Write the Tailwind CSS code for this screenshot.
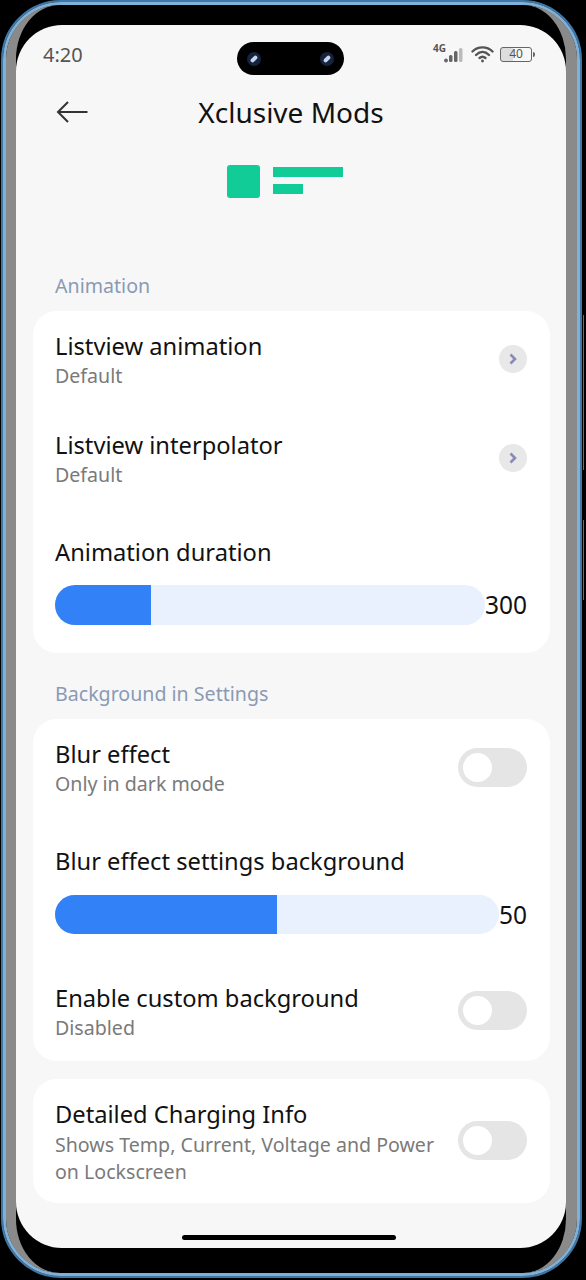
<!DOCTYPE html>
<html lang="en">
<head>
<meta charset="utf-8"/>
<meta content="width=device-width, initial-scale=1.0" name="viewport"/>
<title>Xclusive Mods</title>
<script src="https://cdn.jsdelivr.net/npm/@tailwindcss/browser@4"></script>
</head>
<body class="bg-black font-['Noto_Sans',sans-serif]">
<div class="relative w-[586px] h-[1280px] bg-black overflow-hidden pl-[1px] pr-[4px] pb-[2px]">
  <!-- side buttons -->
  <div class="absolute right-[2px] top-[315px] w-[1px] h-[155px] bg-[#3f78a8]"></div>
  <div class="absolute right-[2px] top-[520px] w-[1px] h-[80px] bg-[#3f78a8]"></div>
  <!-- phone frame -->
  <div class="h-full rounded-[60px] border-[2px] border-[#3f78a8]">
    <div class="h-full rounded-[58px] border-[3px] border-[#7fb0d8] bg-black">
      <div class="h-full rounded-[54px] border-l-[10px] border-r-[11px] border-[#8a8a8a] bg-black pt-[20px] pb-[25px]">
        <div class="h-full rounded-[46px] bg-[#f7f7f7] flex flex-col overflow-hidden">
          <!-- status bar -->
          <div class="h-[65px] pl-[27px] pr-[31px] flex items-start justify-between text-[#555]">
            <span class="mt-[12px] w-[164px] text-[20px] leading-[36px]">4:20</span>
            <div class="mt-[17px] w-[107px] h-[33px] bg-black rounded-full flex items-center justify-between px-[10px]">
              <div class="w-[14px] h-[14px] rounded-full bg-[#16233f] flex items-center justify-center"><div class="w-[8px] h-[4px] rounded-full bg-[#c4d4ea] -rotate-45"></div></div>
              <div class="w-[14px] h-[14px] rounded-full bg-[#16233f] flex items-center justify-center"><div class="w-[8px] h-[4px] rounded-full bg-[#c4d4ea] -rotate-45"></div></div>
            </div>
            <div class="mt-[20px] w-[161px] flex items-center justify-end gap-[5px]">
              <div class="relative w-[31px] h-[18px]">
                <span class="absolute left-[-2px] top-[-2px] text-[10px] leading-[11px] font-bold">4G</span>
                <svg class="absolute left-[8px] top-[2px]" width="23" height="16" viewBox="0 0 23 16" fill="#666"><circle cx="3" cy="13.5" r="1.9"/><rect x="6" y="8" width="3.500" height="7" rx="1.5"/><rect x="11" y="4" width="3.500" height="11" rx="1.5"/><rect x="16" y="1" width="3.500" height="14" rx="1.5" fill="#bbb"/></svg>
              </div>
              <svg width="24" height="18" viewBox="0 0 24 18" fill="none" stroke="#555" stroke-width="2.4" stroke-linecap="round"><path d="M1.5 6.5C7 1 16 1 21.5 6.5"/><path d="M5 10C9 6 14 6 18 10"/><path d="M8.5 13c2-1.700 4-1.700 6 0"/><circle cx="11.500" cy="16" r="1.400" fill="#555" stroke="none"/></svg>
              <div class="flex items-center gap-[1px]">
                <div class="w-[32px] h-[15px] rounded-[3px] border border-[#666] flex items-center justify-center text-[12px] leading-none bg-gradient-to-r from-[#ddd] from-40% to-transparent to-40%">40</div>
                <div class="w-[2px] h-[5px] bg-[#666] rounded-r-full"></div>
              </div>
            </div>
          </div>
          <!-- title -->
          <div class="relative h-[46px] pb-[2px] flex items-center justify-center">
            <svg class="absolute left-[40px] top-[10px]" width="32" height="24" viewBox="0 0 32 24" fill="none" stroke="#333" stroke-width="2"><path d="M31.500 12H2"/><path d="M12 2 2 12l10 10"/></svg>
            <h1 class="text-[28px] leading-[44px] text-[#111]">Xclusive Mods</h1>
          </div>
          <!-- logo -->
          <div class="mt-[29px] ml-[211px] flex gap-[13px]">
            <div class="w-[33px] h-[33px] rounded-[3px] bg-[#12cc97]"></div>
            <div class="pt-[2px] flex flex-col gap-[7px]">
              <div class="w-[70px] h-[10px] bg-[#12cc97]"></div>
              <div class="w-[30px] h-[10px] bg-[#12cc97]"></div>
            </div>
          </div>

          <p class="mt-[74px] ml-[39px] text-[19.6px] leading-[28px] text-[#8a9ab5]">Animation</p>
          <section class="mt-[11px] ml-[17px] mr-[16px] pl-[22px] pr-[23px] pb-[28px] bg-white rounded-[24px]">
            <div class="h-[99px] flex items-center justify-between">
              <div>
                <p class="pb-[3px] text-[23.7px] leading-[28px] text-[#111]">Listview animation</p>
                <p class="text-[19.6px] leading-[26px] text-[#7a7a7a]">Default</p>
              </div>
              <div class="mb-[3px] w-[28px] h-[28px] rounded-full bg-[#e8e8e8] flex items-center justify-center">
                <svg width="10" height="12" viewBox="0 0 10 12" fill="none" stroke="#8a8ab8" stroke-width="2.600"><path d="M2.500 1.500 7 6l-4.500 4.500"/></svg>
              </div>
            </div>
            <div class="h-[99px] flex items-center justify-between">
              <div>
                <p class="pb-[3px] text-[23.7px] leading-[28px] text-[#111]">Listview interpolator</p>
                <p class="text-[19.6px] leading-[26px] text-[#7a7a7a]">Default</p>
              </div>
              <div class="mb-[3px] w-[28px] h-[28px] rounded-full bg-[#e8e8e8] flex items-center justify-center">
                <svg width="10" height="12" viewBox="0 0 10 12" fill="none" stroke="#8a8ab8" stroke-width="2.600"><path d="M2.500 1.500 7 6l-4.500 4.500"/></svg>
              </div>
            </div>
            <p class="mt-[29px] pb-[2px] text-[23.7px] leading-[28px] text-[#111]">Animation duration</p>
            <div class="mt-[17px] flex items-center">
              <div class="flex-1 h-[40px] rounded-full bg-[#e8f1fd] overflow-hidden"><div class="w-[96px] h-full bg-[#3381f6]"></div></div>
              <span class="text-[24.5px] leading-[40px] text-[#111]">300</span>
            </div>
          </section>

          <p class="mt-[27px] ml-[39px] text-[19.6px] leading-[28px] text-[#8a9ab5]">Background in Settings</p>
          <section class="mt-[11px] ml-[17px] mr-[16px] pl-[22px] pr-[23px] pt-[21px] pb-[20px] bg-white rounded-[24px]">
            <div class="flex items-center justify-between">
              <div>
                <p class="pb-[3px] text-[23.7px] leading-[28px] text-[#111]">Blur effect</p>
                <p class="text-[19.6px] leading-[26px] text-[#7a7a7a]">Only in dark mode</p>
              </div>
              <div class="mb-[2px] w-[69px] h-[39px] rounded-full bg-[#e5e5e5] pl-[5px] flex items-center"><div class="w-[29px] h-[29px] rounded-full bg-white"></div></div>
            </div>
            <p class="mt-[50px] pb-[2px] text-[23.7px] leading-[28px] text-[#111]">Blur effect settings background</p>
            <div class="mt-[18px] flex items-center">
              <div class="flex-1 h-[39px] rounded-full bg-[#e8f1fd] overflow-hidden"><div class="w-[222px] h-full bg-[#3381f6]"></div></div>
              <span class="text-[24.5px] leading-[39px] text-[#111]">50</span>
            </div>
            <div class="mt-[50px] flex items-center justify-between">
              <div>
                <p class="pb-[3px] text-[23.7px] leading-[28px] text-[#111]">Enable custom background</p>
                <p class="text-[19.6px] leading-[26px] text-[#7a7a7a]">Disabled</p>
              </div>
              <div class="mb-[4px] w-[69px] h-[39px] rounded-full bg-[#e5e5e5] pl-[5px] flex items-center"><div class="w-[29px] h-[29px] rounded-full bg-white"></div></div>
            </div>
          </section>

          <section class="mt-[18px] ml-[17px] mr-[16px] pl-[22px] pr-[23px] pt-[21px] pb-[18px] bg-white rounded-[24px] flex items-center justify-between">
            <div class="w-[385px]">
              <p class="pb-[3px] text-[23.7px] leading-[28px] text-[#111]">Detailed Charging Info</p>
              <p class="text-[19.6px] leading-[27px] text-[#7a7a7a]">Shows Temp, Current, Voltage and Power on Lockscreen</p>
            </div>
            <div class="mb-[5px] w-[69px] h-[39px] rounded-full bg-[#e5e5e5] pl-[5px] flex items-center"><div class="w-[29px] h-[29px] rounded-full bg-white"></div></div>
          </section>

          <div class="mt-auto mb-[8px] ml-[166px] w-[214px] h-[5px] rounded-full bg-black"></div>
        </div>
      </div>
    </div>
  </div>
</div>
</body>
</html>
